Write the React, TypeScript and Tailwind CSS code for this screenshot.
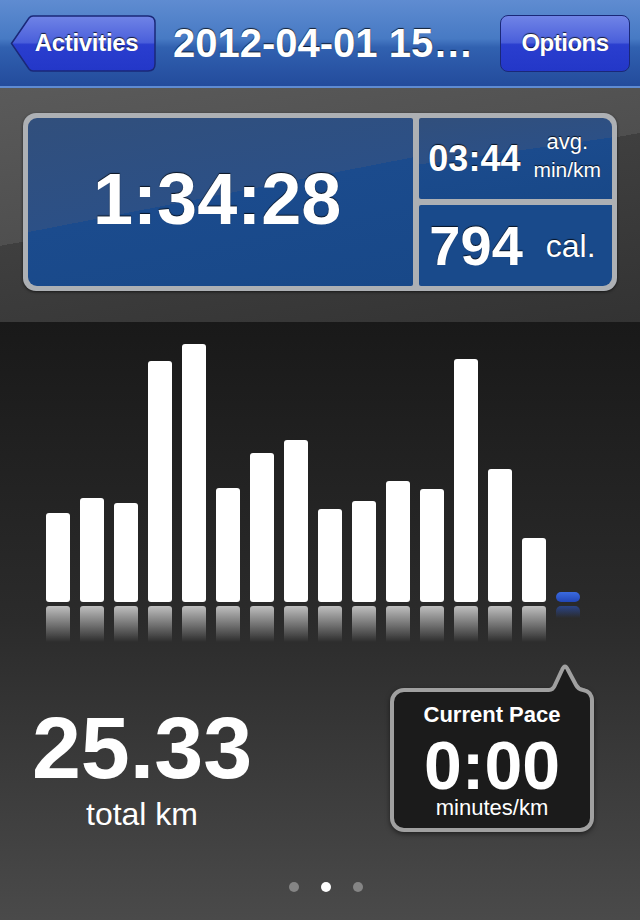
import React from "react"

const bars = [89, 104, 99, 241, 258, 114, 149, 162, 93, 101, 121, 113, 243, 133, 64]

const shadowText = "[text-shadow:0_-1px_1px_rgba(0,0,0,0.75)]"

function BackButton() {
  return (
    <div className="relative w-[146px] h-[57px] flex items-center justify-center pl-[7px]">
      <svg className="absolute inset-0" width="146" height="57" viewBox="0 0 146 57">
        <defs>
          <linearGradient id="btnGrad" x1="0" y1="0" x2="0" y2="1">
            <stop offset="0%" stopColor="#7084e6" />
            <stop offset="48%" stopColor="#4a5fdb" />
            <stop offset="52%" stopColor="#2a3ecf" />
            <stop offset="100%" stopColor="#2337c8" />
          </linearGradient>
        </defs>
        <path
          d="M1.5 28.5 L19 3 Q20.5 1 23 1 L138 1 Q145 1 145 8 L145 49 Q145 56 138 56 L23 56 Q20.5 56 19 54 Z"
          fill="url(#btnGrad)"
          stroke="#1a2878"
          strokeWidth="1.5"
        />
      </svg>
      <span className={`relative text-[24px] font-bold leading-none tracking-[-0.3px] ${shadowText}`}>
        Activities
      </span>
    </div>
  )
}

function NavBar() {
  return (
    <div className="h-[88px] shrink-0 flex items-center px-[10px] border-b-2 border-[#5f8bd2] bg-[linear-gradient(to_bottom,#5f8cd1_0%,#477ac4_45%,#3161b0_55%,#234b9c_100%)]">
      <BackButton />
      <div className={`ml-[17px] text-[40px] font-bold leading-none whitespace-nowrap ${shadowText}`}>
        2012-04-01 15…
      </div>
      <div className="ml-auto w-[130px] h-[57px] rounded-[8px] border-[1.5px] border-[#1a2878] flex items-center justify-center bg-[linear-gradient(to_bottom,#7084e6_0%,#4a5fdb_48%,#2a3ecf_52%,#2337c8_100%)]">
        <span className={`text-[24px] font-bold leading-none tracking-[-0.5px] ${shadowText}`}>Options</span>
      </div>
    </div>
  )
}

function StatsPanel() {
  return (
    <div className="h-[234px] shrink-0 px-[23px] pt-[25px] bg-[linear-gradient(170deg,#5a5a5a_0%,#4f4f4f_45.5%,#3f3f3f_45.5%,#333333_100%)]">
      <div className="h-[178px] flex gap-[6px] p-[5px] rounded-[13px] bg-[#adb0b4] shadow-[0_1px_3px_rgba(0,0,0,0.6)]">
        <div className="w-[386px] rounded-l-[9px] rounded-r-[2px] flex items-center justify-center pr-[7px] pb-[6px] bg-[linear-gradient(169deg,#314f7c_0%,#2c5086_47%,#1b4b8d_47%,#184888_100%)]">
          <span className={`text-[72px] font-bold leading-none ${shadowText}`}>1:34:28</span>
        </div>
        <div className="w-[193px] flex flex-col gap-[6px]">
          <div className="h-[81px] rounded-tr-[9px] rounded-l-[2px] flex items-center pl-[9px] bg-[linear-gradient(172deg,#314f7c_0%,#2c5086_43%,#1b4b8d_43%,#184888_100%)]">
            <span className={`text-[36px] font-bold leading-none ${shadowText}`}>03:44</span>
            <div className={`ml-[13px] mb-[6px] flex flex-col items-center text-[22px] leading-[28px] ${shadowText}`}>
              <span>avg.</span>
              <span className="text-[21px]">min/km</span>
            </div>
          </div>
          <div className="h-[81px] rounded-br-[9px] rounded-l-[2px] flex items-center pl-[10px] pt-[1px] bg-[#194a8b]">
            <span className={`text-[56px] font-bold leading-none ${shadowText}`}>794</span>
            <span className={`ml-[23px] text-[32px] leading-none ${shadowText}`}>cal.</span>
          </div>
        </div>
      </div>
    </div>
  )
}

function PaceBubble() {
  const edge = "M0 30 L4 30 Q8 30 10 25 L17 10 Q20 3 23 10 L31 25 Q33 29 38 30 Q47 31.5 47 41 L47 46"
  return (
    <div className="relative ml-[106px] mt-[46px] w-[204px] h-[144px] rounded-[14px] border-[4px] border-[#a0a0a0] bg-[#1b1b1b] shadow-[0_2px_5px_rgba(0,0,0,0.5)] flex flex-col items-center pt-[12px]">
      <svg className="absolute left-[151px] top-[-32px]" width="50" height="48" viewBox="0 0 50 48">
        <path d={`${edge} L0 46 Z`} fill="#1b1b1b" />
        <path d={edge} fill="none" stroke="#a0a0a0" strokeWidth="4" strokeLinejoin="round" />
      </svg>
      <span className="relative text-[22px] font-bold leading-none">Current Pace</span>
      <span className="mt-[7px] text-[68px] font-bold leading-[64px]">0:00</span>
      <span className="text-[22px] leading-none">minutes/km</span>
    </div>
  )
}

function Chart() {
  return (
    <div className="flex-1 flex flex-col bg-[linear-gradient(to_bottom,#191919_0%,#2b2b2b_50%,#4a4a4a_100%)]">
      <div className="h-[280px] flex items-end gap-[10px] pl-[46px]">
        {bars.map((h, i) => (
          <div key={i} className="w-[24px] rounded-[3px] bg-white" style={{ height: h }} />
        ))}
        <div className="w-[24px] h-[10px] rounded-[5px] bg-[linear-gradient(to_bottom,#3b6be0,#2246b6)]" />
      </div>
      <div className="h-[36px] mt-[4px] flex items-start gap-[10px] pl-[46px]">
        {bars.map((_, i) => (
          <div key={i} className="w-[24px] h-full rounded-t-[3px] bg-gradient-to-b from-white/70 to-white/0" />
        ))}
        <div className="w-[24px] h-[12px] rounded-t-[5px] bg-gradient-to-b from-[#2b55c4]/60 to-transparent" />
      </div>

      <div className="flex items-start">
        <div className="w-[284px] mt-[62px] flex flex-col items-center">
          <span className="text-[88px] font-bold leading-none">25.33</span>
          <span className="mt-[6px] text-[32px] leading-none">total km</span>
        </div>
        <PaceBubble />
      </div>

      <div className="mt-[50px] flex justify-center gap-[22px] pl-[11px]">
        <div className="w-[10px] h-[10px] rounded-full bg-[#858585]" />
        <div className="w-[10px] h-[10px] rounded-full bg-white" />
        <div className="w-[10px] h-[10px] rounded-full bg-[#858585]" />
      </div>
    </div>
  )
}

export default function App() {
  return (
    <div className="w-[640px] h-[920px] overflow-hidden flex flex-col text-white font-['Liberation_Sans',Arial,sans-serif]">
      <NavBar />
      <StatsPanel />
      <Chart />
    </div>
  )
}
